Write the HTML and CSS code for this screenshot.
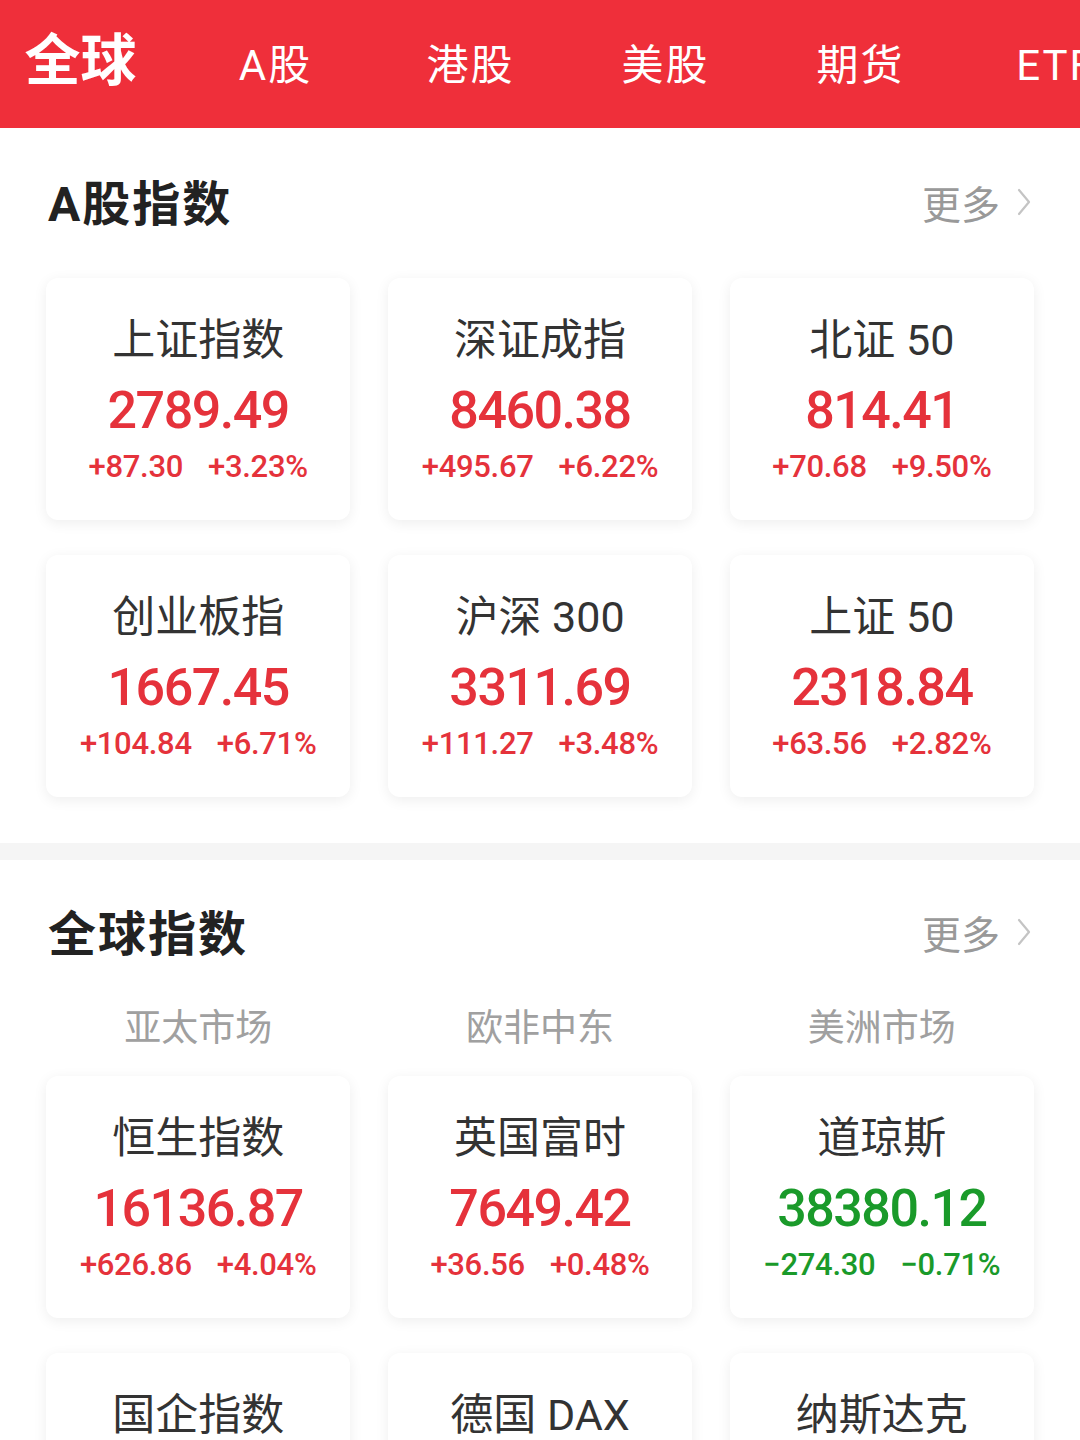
FILE: index.html
```html
<!DOCTYPE html>
<html lang="zh-CN">
<head>
<meta charset="utf-8">
<title>行情</title>
<link rel="stylesheet" href="styles.css">
</head>
<body>
<header class="topbar">
  <nav class="tabs">
    <span class="tab active">全球</span>
    <span class="tab">A股</span>
    <span class="tab">港股</span>
    <span class="tab">美股</span>
    <span class="tab">期货</span>
    <span class="tab">ETF</span>
  </nav>
</header>

<section class="section">
  <div class="sec-head">
    <h2 class="sec-title">A股指数</h2>
    <a class="more">更多<svg class="chev" viewBox="0 0 16 30" width="16" height="30"><path d="M3 3 L13 15 L3 27" fill="none" stroke="#c4c4c4" stroke-width="2.2" stroke-linecap="round" stroke-linejoin="round"/></svg></a>
  </div>
  <div class="grid">
    <div class="card"><div class="name">上证指数</div><div class="val up">2789.49</div><div class="chg up"><span>+87.30</span><span>+3.23%</span></div></div>
    <div class="card"><div class="name">深证成指</div><div class="val up">8460.38</div><div class="chg up"><span>+495.67</span><span>+6.22%</span></div></div>
    <div class="card"><div class="name">北证 50</div><div class="val up">814.41</div><div class="chg up"><span>+70.68</span><span>+9.50%</span></div></div>
    <div class="card"><div class="name">创业板指</div><div class="val up">1667.45</div><div class="chg up"><span>+104.84</span><span>+6.71%</span></div></div>
    <div class="card"><div class="name">沪深 300</div><div class="val up">3311.69</div><div class="chg up"><span>+111.27</span><span>+3.48%</span></div></div>
    <div class="card"><div class="name">上证 50</div><div class="val up">2318.84</div><div class="chg up"><span>+63.56</span><span>+2.82%</span></div></div>
  </div>
</section>

<div class="band"></div>

<section class="section second">
  <div class="sec-head">
    <h2 class="sec-title">全球指数</h2>
    <a class="more">更多<svg class="chev" viewBox="0 0 16 30" width="16" height="30"><path d="M3 3 L13 15 L3 27" fill="none" stroke="#c4c4c4" stroke-width="2.2" stroke-linecap="round" stroke-linejoin="round"/></svg></a>
  </div>
  <div class="subtabs">
    <span>亚太市场</span>
    <span>欧非中东</span>
    <span>美洲市场</span>
  </div>
  <div class="grid">
    <div class="card"><div class="name">恒生指数</div><div class="val up">16136.87</div><div class="chg up"><span>+626.86</span><span>+4.04%</span></div></div>
    <div class="card"><div class="name">英国富时</div><div class="val up">7649.42</div><div class="chg up"><span>+36.56</span><span>+0.48%</span></div></div>
    <div class="card"><div class="name">道琼斯</div><div class="val down">38380.12</div><div class="chg down"><span>−274.30</span><span>−0.71%</span></div></div>
    <div class="card"><div class="name">国企指数</div></div>
    <div class="card"><div class="name">德国 DAX</div></div>
    <div class="card"><div class="name">纳斯达克</div></div>
  </div>
</section>
</body>
</html>
```

FILE: styles.css
```css
* { box-sizing: border-box; }
html, body { margin: 0; padding: 0; background: #fff; }
body {
  font-family: Roboto, "Noto Sans CJK SC", sans-serif;
  color: #333;
  width: 1080px;
  overflow: hidden;
}

.topbar {
  background: #ef2f3a;
  height: 128px;
  overflow: hidden;
}
.tabs {
  display: flex;
  align-items: center;
  height: 128px;
  margin-left: -17px;
  padding-bottom: 6px;
}
.tab {
  flex: 0 0 195px;
  text-align: center;
  color: #fff;
  font-size: 42px;
  line-height: 60px;
  white-space: nowrap;
  padding-top: 10px;
  letter-spacing: 2px;
}
.tab.active {
  font-size: 56px;
  font-weight: 700;
  padding-top: 0;
  letter-spacing: 0;
}

.section {
  padding: 40px 46px 46px;
}
.section.second {
  padding-top: 38px;
}
.sec-head {
  display: flex;
  align-items: center;
  justify-content: space-between;
  height: 64px;
  margin-bottom: 46px;
}
.sec-title {
  margin: 0 0 0 2px;
  font-size: 48px;
  font-weight: 700;
  color: #222;
  letter-spacing: 2px;
}
.more {
  display: flex;
  align-items: center;
  gap: 16px;
  font-size: 39px;
  color: #999;
  margin-top: 4px;
  margin-right: 2px;
}
.chev { display: block; }

.subtabs {
  display: grid;
  grid-template-columns: repeat(3, 1fr);
  column-gap: 37px;
  margin-top: -10px;
  margin-bottom: 28px;
  height: 50px;
  align-items: center;
  text-align: center;
  font-size: 37px;
  color: #a0a0a0;
}

.grid {
  display: grid;
  grid-template-columns: repeat(3, 1fr);
  column-gap: 37.5px;
  row-gap: 35px;
}
.card {
  height: 242px;
  background: #fff;
  border-radius: 12px;
  box-shadow: 0 3px 14px rgba(0, 0, 0, 0.07);
  padding-top: 37px;
  text-align: center;
}
.name {
  font-size: 43px;
  line-height: 50px;
  color: #333;
  height: 50px;
}
.val {
  margin-top: 16px;
  font-size: 52px;
  font-weight: 500;
  line-height: 60px;
  letter-spacing: -1.5px;
}
.chg {
  margin-top: 6px;
  font-size: 31px;
  font-weight: 500;
  line-height: 40px;
  display: flex;
  justify-content: center;
  gap: 25px;
  letter-spacing: -0.3px;
}
.up { color: #e5323b; }
.down { color: #1a9a2a; }

.band {
  height: 17px;
  background: #f5f5f5;
}
```
